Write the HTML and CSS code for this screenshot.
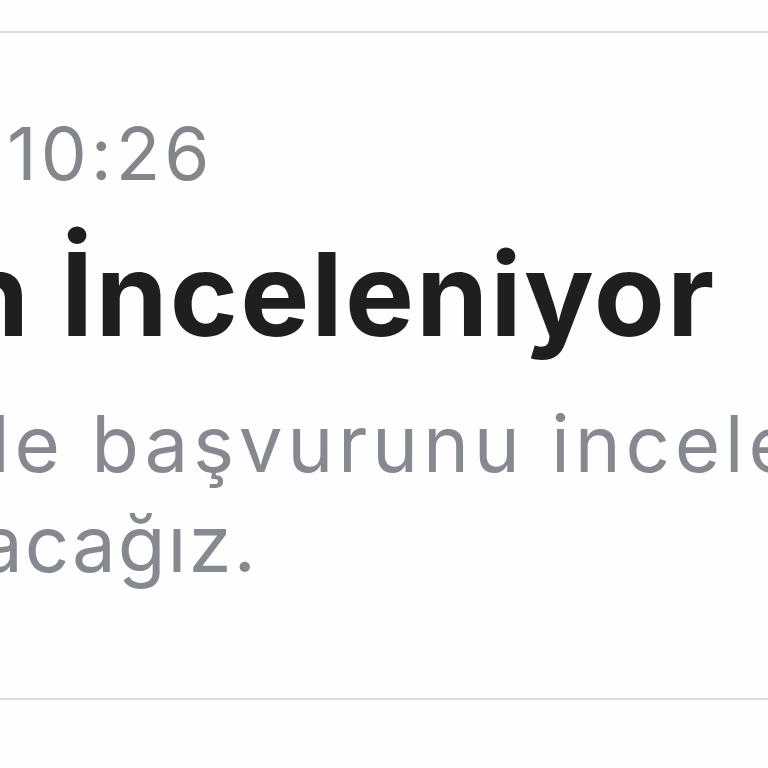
FILE: index.html
```html
<!DOCTYPE html>
<html lang="tr">
<head>
<meta charset="utf-8">
<link rel="stylesheet" href="styles.css">
</head>
<body>
<div class="page">
  <section class="card">
    <div class="time">10:26</div>
    <h1 class="title">n İnceleniyor</h1>
    <p class="desc">
      <span class="line line-1">de başvurunu inceleyip</span>
      <span class="line line-2">acağız.</span>
    </p>
  </section>
</div>
</body>
</html>
```
FILE: styles.css
```css
html, body {
  margin: 0;
  padding: 0;
  background: #fefefe;
}
.page {
  width: 768px;
  height: 768px;
  overflow: hidden;
  padding-top: 31px;
  box-sizing: border-box;
}
.card {
  border-top: 2px solid #dcdcdc;
  border-bottom: 2px solid #dcdcdc;
  padding: 77px 0 104px 0;
  font-family: Inter, "Noto Sans", sans-serif;
  overflow: hidden;
}
.time {
  font-size: 73px;
  line-height: 88px;
  color: #83878c;
  margin-left: 7px;
  letter-spacing: 0.055em;
  white-space: nowrap;
}
.title {
  margin: 26px 0 0 -43px;
  font-size: 116px;
  line-height: 140px;
  font-weight: 700;
  letter-spacing: 0.018em;
  color: #1e1f21;
  white-space: nowrap;
}
.desc {
  margin: 30px 0 0 0;
  font-size: 78px;
  line-height: 100px;
  letter-spacing: 0.06em;
  color: #868a90;
}
.line {
  display: block;
  white-space: nowrap;
}
.line-1 { margin-left: -38px; }
.line-2 {
  margin-left: -21px;
  letter-spacing: 0.025em;
}
```
